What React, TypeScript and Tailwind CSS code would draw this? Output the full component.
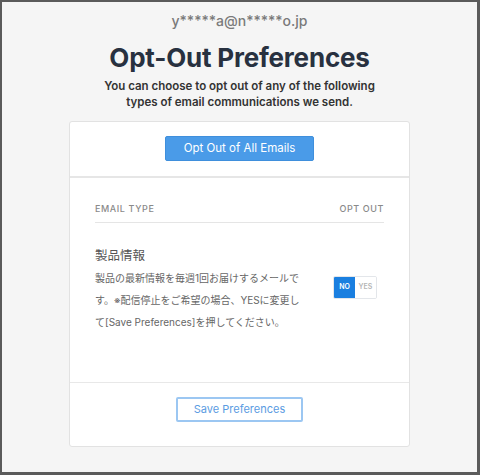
import React from "react";

export default function App() {
  return (
    <div
      className="w-[480px] h-[475px] bg-[#5b5b5b] p-[2px] pr-[3px] pb-[3px]"
      style={{ fontFamily: "Inter, 'Noto Sans CJK JP', sans-serif" }}
    >
      <div className="w-full h-full bg-[#f5f5f5] flex flex-col items-center">
        <div className="mt-[9px] text-[14px] leading-[20px] font-medium text-[#7a7a7a]">y*****a@n*****o.jp</div>
        <h1 className="mt-[12px] text-[26px] leading-[30px] font-bold text-[#283140] tracking-[-0.2px]">Opt-Out Preferences</h1>
        <p className="mt-[5px] text-[11.5px] leading-[16px] font-semibold text-[#333] text-center">
          You can choose to opt out of any of the following
          <br />
          types of email communications we send.
        </p>
        <div className="mt-[11px] w-[341px] bg-white border border-[#e2e2e2] rounded-[3px] flex flex-col">
          <div className="h-[56px] flex items-start justify-center pt-[14px] border-b-2 border-[#e6e6e6]">
            <button className="w-[149px] h-[25px] bg-[#4a9be8] text-white text-[11.5px] rounded-[2px] border border-[#3f8fdc]">
              Opt Out of All Emails
            </button>
          </div>
          <div className="px-[25px] pt-[24px] pb-[49px] border-b border-[#e8e8e8]">
            <div className="flex justify-between text-[9px] font-medium tracking-[0.6px] text-[#8a8a8a] pb-[6px] border-b border-[#e5e5e5]">
              <span>EMAIL TYPE</span>
              <span>OPT OUT</span>
            </div>
            <div className="mt-[24px] text-[12.5px] leading-[18px] text-[#555]">製品情報</div>
            <div className="mt-[2px] flex items-start justify-between">
              <p className="w-[207px] text-[10px] leading-[22px] text-[#666]">
                製品の最新情報を毎週1回お届けするメールです。※配信停止をご希望の場合、YESに変更して[Save Preferences]を押してください。
              </p>
              <div className="mt-[9px] mr-[7px] flex h-[23px] border border-[#e3e6ea] rounded-[2px] overflow-hidden">
                <div className="w-[21px] bg-[#1a7fe0] text-white text-[7px] font-semibold flex items-center justify-center">NO</div>
                <div className="w-[21px] bg-white text-[#b5b5b5] text-[7px] font-semibold flex items-center justify-center">YES</div>
              </div>
            </div>
          </div>
          <div className="h-[63px] flex justify-center pt-[14px]">
            <button className="w-[127px] h-[25px] bg-white border-2 border-[#9cc7f2] text-[#5b9ce2] text-[11px] rounded-[2px]">
              Save Preferences
            </button>
          </div>
        </div>
      </div>
    </div>
  );
}
